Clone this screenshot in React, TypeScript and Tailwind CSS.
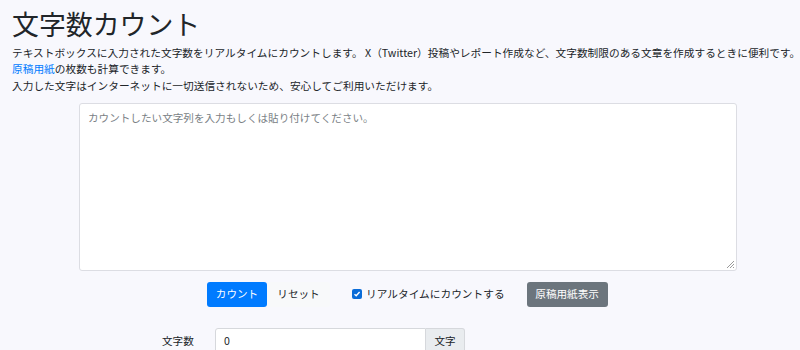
import React from "react";

export default function App() {
  const font = { fontFamily: '"Noto Sans CJK JP", "Noto Sans", sans-serif' };
  return (
    <div className="w-[800px] h-[350px] overflow-hidden bg-[#f8f8fd] text-[#212529]" style={font}>
      <div className="pl-[12px]">
        <h1 className="pt-[8px] h-[40px] text-[26.9px] leading-[32px] font-normal">文字数カウント</h1>
        <div className="mt-[5px] text-[10.7px] leading-[16.3px] whitespace-nowrap">
          <p>テキストボックスに入力された文字数をリアルタイムにカウントします。 X（Twitter）投稿やレポート作成など、文字数制限のある文章を作成するときに便利です。</p>
          <p><span className="text-[#007bff]">原稿用紙</span>の枚数も計算できます。</p>
          <p>入力した文字はインターネットに一切送信されないため、安心してご利用いただけます。</p>
        </div>
      </div>
      <div className="mt-[9px] ml-[79px] w-[658px] h-[168px] bg-white border border-[#dcdde3] rounded-[3px] relative">
        <div className="pl-[8px] pt-[6px] text-[10.6px] leading-[16px] text-[#7a7f85]">カウントしたい文字列を入力もしくは貼り付けてください。</div>
        <svg className="absolute right-[1px] bottom-[1px]" width="9" height="9" viewBox="0 0 9 9">
          <path d="M8 1 L1 8 M8 4 L4 8 M8 7 L7 8" stroke="#9a9a9a" strokeWidth="1" />
        </svg>
      </div>
      <div className="mt-[11px] flex items-center">
        <div className="ml-[207px] flex">
          <button className="w-[60px] h-[25px] bg-[#007bff] text-white text-[10.6px] rounded-[3px]">カウント</button>
          <button className="w-[63px] h-[25px] bg-[#f8f9fa] text-[#212529] text-[10.6px] rounded-[3px]">リセット</button>
        </div>
        <label className="ml-[22px] flex items-center text-[10.7px]">
          <span className="w-[10px] h-[10px] rounded-[2px] bg-[#0a6cd8] flex items-center justify-center">
            <svg width="8" height="8" viewBox="0 0 8 8">
              <path d="M1.5 4.2 L3.2 5.8 L6.6 2" stroke="white" strokeWidth="1.4" fill="none" />
            </svg>
          </span>
          <span className="ml-[4px]">リアルタイムにカウントする</span>
        </label>
        <button className="ml-[22px] w-[81px] h-[25px] bg-[#6c757d] text-white text-[10.6px] rounded-[3px]">原稿用紙表示</button>
      </div>
      <div className="mt-[21px] flex items-center">
        <div className="ml-[162px] w-[53px] text-[10.6px] leading-[25px]">文字数</div>
        <div className="flex h-[25px]">
          <div className="w-[211px] bg-white border border-[#d6d8dc] rounded-l-[3px] pl-[8px] text-[10.6px] leading-[23px]">0</div>
          <div className="w-[39px] bg-[#e9ecef] border border-l-0 border-[#d6d8dc] rounded-r-[3px] text-[10.6px] leading-[23px] text-center">文字</div>
        </div>
      </div>
    </div>
  );
}
